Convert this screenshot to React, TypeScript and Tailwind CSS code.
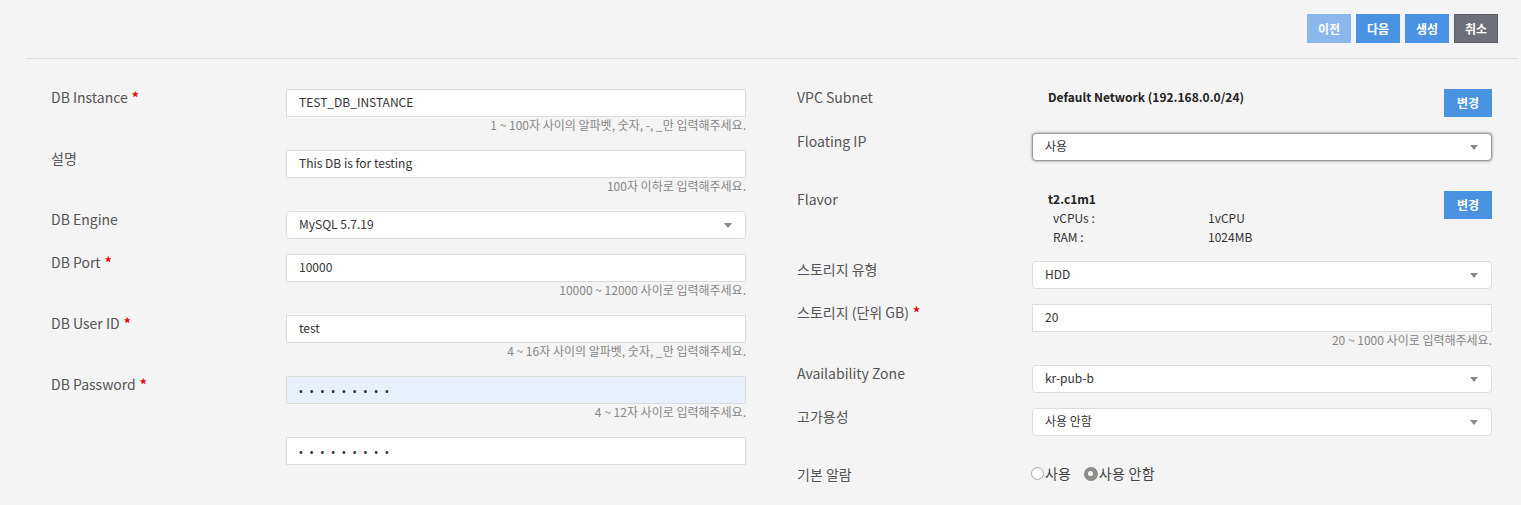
import React from 'react'

const FONT = { fontFamily: '"Noto Sans CJK KR", "Noto Sans", sans-serif' }

function Label({ text, required }: { text: string; required?: boolean }) {
  return (
    <div className="w-[235px] shrink-0 text-[14px] leading-4 text-[#555]">
      {text}
      {required && <span className="ml-1 text-[#e00] font-bold">*</span>}
    </div>
  )
}

function Help({ text }: { text: string }) {
  return <div className="h-4 text-right text-[12px] leading-4 text-[#888]">{text}</div>
}

function TextInput({ value, autofill, password }: { value: string; autofill?: boolean; password?: boolean }) {
  return (
    <div
      className={`h-7 border border-[#dcdcdc] px-3 pb-[2px] flex items-center text-[12px] text-[#333] ${autofill ? 'bg-[#e8f0fe]' : 'bg-white'}`}
    >
      {password ? <span className="tracking-[7px] text-[11px] pt-[2px]">{value}</span> : value}
    </div>
  )
}

function Select({ value, focused }: { value: string; focused?: boolean }) {
  return (
    <div
      className={`h-7 rounded bg-white px-3 flex items-center justify-between text-[12px] text-[#333] border ${
        focused ? 'border-[#9a9a9a] shadow-[0_0_3px_rgba(0,0,0,0.45)]' : 'border-[#dcdcdc]'
      }`}
    >
      <span className="pb-[2px]">{value}</span>
      <svg width="8" height="5" viewBox="0 0 8 5" className="mr-[1px]">
        <path d="M0 0h8L4 5z" fill="#8a8a8a" />
      </svg>
    </div>
  )
}

function Btn({ text, color }: { text: string; color: string }) {
  return (
    <button className={`h-[29px] w-11 text-[12px] font-bold text-white ${color}`}>{text}</button>
  )
}

export default function App() {
  const dots = '•••••••••'
  return (
    <div className="min-h-[505px] w-[1521px] bg-[#f4f4f4]" style={FONT}>
      <div className="flex justify-end gap-[5px] pt-[14px] pr-[23px]">
        <Btn text="이전" color="bg-[#8ab7ec]" />
        <Btn text="다음" color="bg-[#4a93e3]" />
        <Btn text="생성" color="bg-[#4a93e3]" />
        <button className="h-[29px] w-11 text-[12px] font-bold text-white bg-[#6d7078] border border-[#5a5d64]">취소</button>
      </div>
      <div className="ml-[26px] mr-[3px] mt-[15px] border-t border-[#dedede]" />

      <div className="flex gap-[51px] pl-[51px] pt-[30px]">
        {/* left column */}
        <div className="w-[695px]">
          <div className="flex mb-[17px]">
            <Label text="DB Instance" required />
            <div className="flex-1">
              <TextInput value="TEST_DB_INSTANCE" />
              <Help text="1 ~ 100자 사이의 알파벳, 숫자, -, _만 입력해주세요." />
            </div>
          </div>
          <div className="flex mb-[17px]">
            <Label text="설명" />
            <div className="flex-1">
              <TextInput value="This DB is for testing" />
              <Help text="100자 이하로 입력해주세요." />
            </div>
          </div>
          <div className="flex mb-[15px]">
            <Label text="DB Engine" />
            <div className="flex-1">
              <Select value="MySQL 5.7.19" />
            </div>
          </div>
          <div className="flex mb-[17px]">
            <Label text="DB Port" required />
            <div className="flex-1">
              <TextInput value="10000" />
              <Help text="10000 ~ 12000 사이로 입력해주세요." />
            </div>
          </div>
          <div className="flex mb-[17px]">
            <Label text="DB User ID" required />
            <div className="flex-1">
              <TextInput value="test" />
              <Help text="4 ~ 16자 사이의 알파벳, 숫자, _만 입력해주세요." />
            </div>
          </div>
          <div className="flex mb-[17px]">
            <Label text="DB Password" required />
            <div className="flex-1">
              <TextInput value={dots} autofill password />
              <Help text="4 ~ 12자 사이로 입력해주세요." />
            </div>
          </div>
          <div className="flex">
            <div className="w-[235px] shrink-0" />
            <div className="flex-1">
              <TextInput value={dots} password />
            </div>
          </div>
        </div>

        {/* right column */}
        <div className="w-[695px]">
          <div className="flex mb-4">
            <Label text="VPC Subnet" />
            <div className="flex-1 flex justify-between">
              <div className="pl-4 text-[12px] font-bold text-[#222] leading-4">Default Network (192.168.0.0/24)</div>
              <button className="h-7 w-12 bg-[#4a93e3] text-[12px] font-bold text-white">변경</button>
            </div>
          </div>
          <div className="flex mb-[30px]">
            <Label text="Floating IP" />
            <div className="flex-1">
              <Select value="사용" focused />
            </div>
          </div>
          <div className="flex mb-[15px]">
            <Label text="Flavor" />
            <div className="flex-1 flex justify-between">
              <div className="pl-4 text-[12px] text-[#333]">
                <div className="font-bold leading-4 text-[#222]">t2.c1m1</div>
                <div className="flex pl-[5px] leading-[19px] mt-[1px]">
                  <span className="w-[155px]">vCPUs :</span>
                  <span>1vCPU</span>
                </div>
                <div className="flex pl-[5px] leading-[19px]">
                  <span className="w-[155px]">RAM :</span>
                  <span>1024MB</span>
                </div>
              </div>
              <button className="h-7 w-12 bg-[#4a93e3] text-[12px] font-bold text-white">변경</button>
            </div>
          </div>
          <div className="flex mb-[15px]">
            <Label text="스토리지 유형" />
            <div className="flex-1">
              <Select value="HDD" />
            </div>
          </div>
          <div className="flex mb-[17px]">
            <Label text="스토리지 (단위 GB)" required />
            <div className="flex-1">
              <TextInput value="20" />
              <Help text="20 ~ 1000 사이로 입력해주세요." />
            </div>
          </div>
          <div className="flex mb-[15px]">
            <Label text="Availability Zone" />
            <div className="flex-1">
              <Select value="kr-pub-b" />
            </div>
          </div>
          <div className="flex mb-[27px]">
            <Label text="고가용성" />
            <div className="flex-1">
              <Select value="사용 안함" />
            </div>
          </div>
          <div className="flex items-center">
            <Label text="기본 알람" />
            <div className="flex-1 flex items-center text-[14px] text-[#444] -ml-[1px]">
              <span className="w-[13px] h-[13px] rounded-full border border-[#aaa] bg-white" />
              <span className="ml-[1px]">사용</span>
              <span className="ml-[13px] w-[14px] h-[14px] rounded-full bg-[#8d8d8d] flex items-center justify-center">
                <span className="w-[5px] h-[5px] rounded-full bg-white" />
              </span>
              <span className="ml-[1px] tracking-[0.3px]">사용 안함</span>
            </div>
          </div>
        </div>
      </div>
    </div>
  )
}
